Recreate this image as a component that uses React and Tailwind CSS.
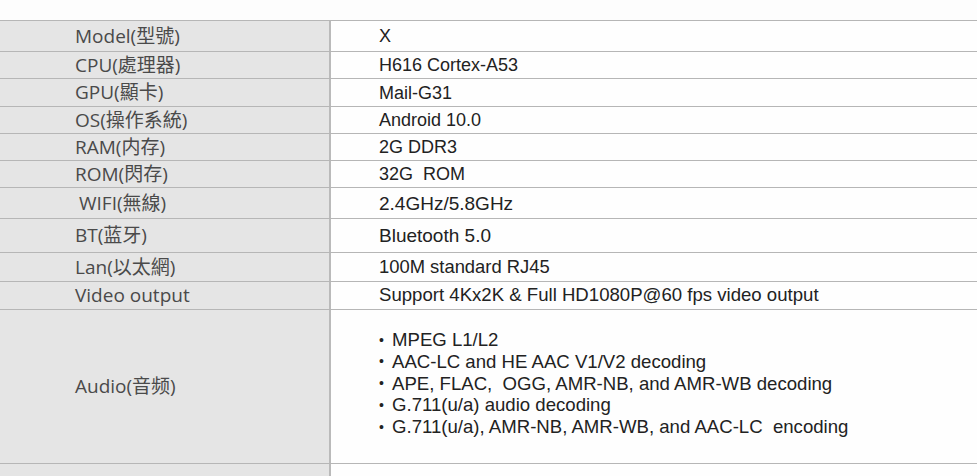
import React from "react";

const rows = [
  { label: "Model(型號)", value: "X", h: "h-[31px]", vs: "text-[18px]" },
  { label: "CPU(處理器)", value: "H616 Cortex-A53", h: "h-[27px]", vs: "text-[18px]" },
  { label: "GPU(顯卡)", value: "Mail-G31", h: "h-[28px]", vs: "text-[18px]" },
  { label: "OS(操作系統)", value: "Android 10.0", h: "h-[27px]", vs: "text-[18px]" },
  { label: "RAM(内存)", value: "2G DDR3", h: "h-[27px]", vs: "text-[18px]" },
  { label: "ROM(閃存)", value: "32G  ROM", h: "h-[27px]", vs: "text-[18px]" },
  { label: "WIFI(無線)", value: "2.4GHz/5.8GHz", h: "h-[31px]", vs: "text-[19px]", lp: "pl-[79px]" },
  { label: "BT(蓝牙)", value: "Bluetooth 5.0", h: "h-[34px]", vs: "text-[19px]" },
  { label: "Lan(以太網)", value: "100M standard RJ45", h: "h-[29px]", vs: "text-[18.4px]" },
  { label: "Video output", value: "Support 4Kx2K & Full HD1080P@60 fps video output", h: "h-[28px]", vs: "text-[18.6px]" },
];

const audio = [
  "MPEG L1/L2",
  "AAC-LC and HE AAC V1/V2 decoding",
  "APE, FLAC,  OGG, AMR-NB, and AMR-WB decoding",
  "G.711(u/a) audio decoding",
  "G.711(u/a), AMR-NB, AMR-WB, and AAC-LC  encoding",
];

const labelFont = "font-['Open_Sans','Noto_Sans_CJK_TC',sans-serif]";
const valueFont = "font-['Liberation_Sans',Arial,sans-serif]";

export default function App() {
  return (
    <div className="w-[977px] h-[476px] overflow-hidden bg-[#fdfdfd]">
      <div className="mt-[20px] flex flex-col">
        {rows.map((r, i) => (
          <div key={i} className={`flex ${r.h} border-t border-[#b6b6b6]`}>
            <div className={`w-[331px] shrink-0 bg-[#e5e5e5] border-r-2 border-[#bababa] flex items-center ${r.lp || "pl-[75px]"}`}>
              <span className={`${labelFont} text-[19px] text-[#4a4a4a] whitespace-pre leading-none`}>{r.label}</span>
            </div>
            <div className="flex-1 flex items-center pl-[48px] bg-[#fefefe]">
              <span className={`${valueFont} ${r.vs} text-[#222] whitespace-pre leading-none`}>{r.value}</span>
            </div>
          </div>
        ))}
        <div className="flex h-[154px] border-t border-[#b6b6b6]">
          <div className="w-[331px] shrink-0 bg-[#e5e5e5] border-r-2 border-[#bababa] flex items-center pl-[75px]">
            <span className={`${labelFont} text-[19px] text-[#4a4a4a] leading-none`}>Audio(音频)</span>
          </div>
          <div className="flex-1 flex flex-col justify-center pl-[48px] pb-[6px] bg-[#fefefe]">
            {audio.map((a, i) => (
              <div key={i} className={`flex items-center h-[21.75px] ${valueFont} text-[18.6px] text-[#222]`}>
                <span className="w-[13px] text-[14px]">•</span>
                <span className="whitespace-pre">{a}</span>
              </div>
            ))}
          </div>
        </div>
        <div className="flex h-[40px] border-t border-[#b6b6b6]">
          <div className="w-[331px] shrink-0 bg-[#e5e5e5] border-r-2 border-[#bababa]" />
          <div className="flex-1 bg-[#fefefe]" />
        </div>
      </div>
    </div>
  );
}
